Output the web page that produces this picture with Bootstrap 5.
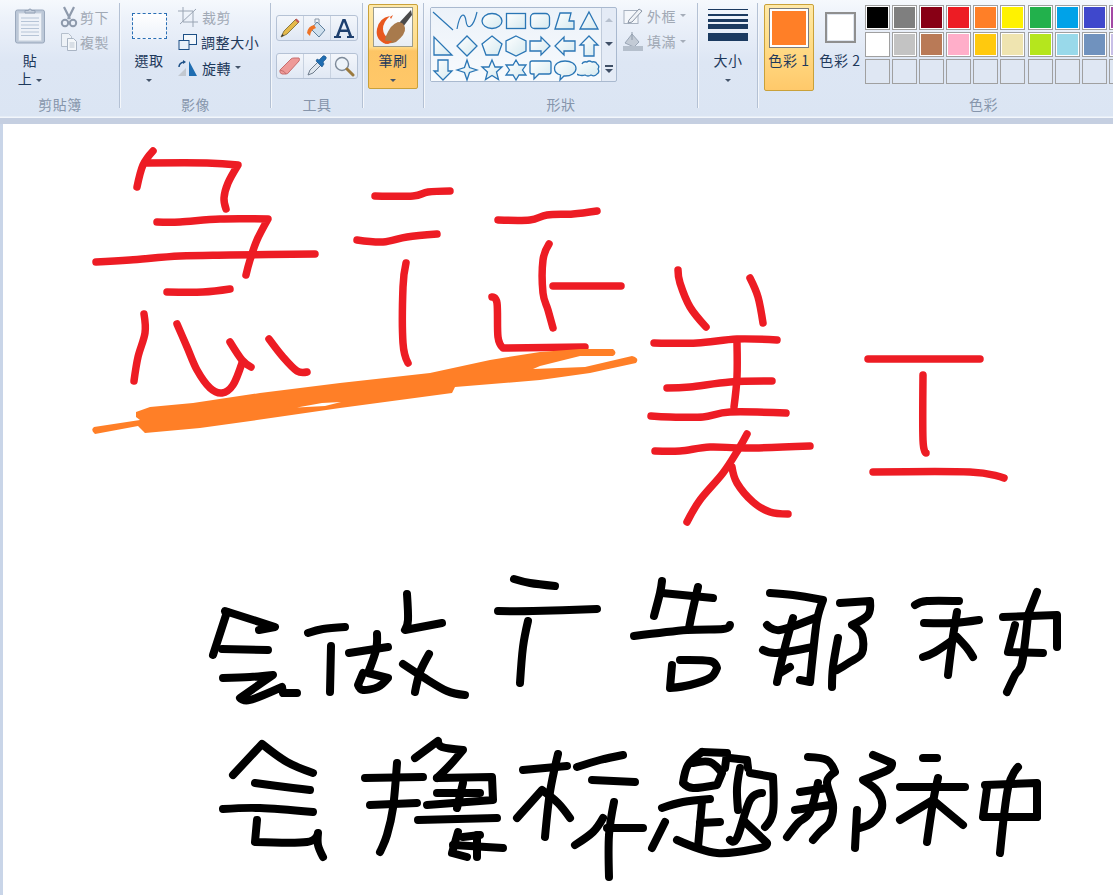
<!DOCTYPE html>
<html lang="zh-Hant">
<head>
<meta charset="utf-8">
<title>小畫家</title>
<link href="https://cdn.jsdelivr.net/npm/bootstrap@5.3.0/dist/css/bootstrap.min.css" rel="stylesheet">
<style>
html,body{height:100%;overflow:hidden;}
body{background:#c9d5e8;font-family:"Noto Sans CJK TC","Noto Sans CJK JP",sans-serif;font-size:14px;line-height:18px;color:#1e395b;}
.paint-app{width:1113px;height:895px;}
.ribbon{height:118px;background:linear-gradient(#f6f9fd 0,#edf2fa 18px,#dde6f4 62px,#dbe5f3 116px,#f2f6fb 117px);flex:none;}
.band{height:6px;background:#c5cfe1;flex:none;}
.rgroup{height:117px;flex:none;position:relative;}
.rgroup::after{content:"";position:absolute;right:0;top:3px;height:105px;width:1px;background:#b4c1d4;box-shadow:1px 0 0 #f4f7fb;}
.rgroup.last::after{display:none;}
.w-clip{width:120px;}.w-img{width:151px;}.w-tool{width:92px;}.w-brush{width:61px;}.w-shape{width:274px;}.w-size{width:60px;}.w-color{width:355px;}
.rbody{height:96px;position:relative;}
.rlabel{height:21px;text-align:center;color:#8695ab;letter-spacing:.5px;line-height:17px;}
.rlabel-color{padding-left:96px;}
.lbl{letter-spacing:.6px;white-space:nowrap;}
.off{color:#a1a9b5;}
.caret-dn{display:inline-block;width:0;height:0;border:3px solid transparent;border-top:3px solid #44546a;border-bottom:0;vertical-align:middle;}
.caret-off{border-top-color:#a5adb9;}
.bigbtn{width:44px;display:flex;flex-direction:column;align-items:center;text-align:center;flex:none;}
.stack{display:flex;flex-direction:column;flex:none;}
.lift{margin-top:-3px;}
.rowitem{display:flex;align-items:center;gap:4px;height:25.5px;white-space:nowrap;}
.clip-wrap{padding:7px 0 0 8px;gap:8px;}
.clip-wrap .rowitem{gap:2px;}
.clip-top{height:40px;}
.line-2{height:18px;}
.img-wrap{padding:7px 0 0 7px;gap:7px;}
.sel-box{width:35px;height:26px;border:1px dashed #2a6fb5;margin-top:6px;margin-bottom:12px;background:linear-gradient(#fff,#eef3fa);flex:none;}
.tool-wrap{padding:15px 0 0 5px;gap:12px;}
.toolbar-box{width:82px;height:26px;border:1px solid #b5c2d5;border-radius:3px;background:linear-gradient(#f3f6fb,#e0e8f4);display:flex;}
.toolcell{flex:1;display:flex;align-items:center;justify-content:center;border-right:1px solid #c8d2e0;}
.toolcell:last-child{border-right:0;}
.brushbtn{width:50px;height:85px;margin:4px 0 0 5px;border:1px solid #c9a13a;border-radius:2px;background:linear-gradient(#ffe9a8 0,#ffdc8a 42px,#fdc565 46px,#ffc869 85px);display:flex;flex-direction:column;align-items:center;}
.brushico{width:40px;height:40px;margin-top:2px;margin-bottom:4px;border:1px solid #9c9c8a;background:linear-gradient(#fff,#e8eef4);}
.gallery-outer{width:187px;height:75px;border:1px solid #a9b9cf;border-radius:2px;margin:7px 0 0 6px;background:#e4ebf6;display:flex;flex:none;}
.gallery{width:171px;background:linear-gradient(#ecf2f9,#f7fafd);display:grid;grid-template-columns:repeat(7,24.3px);grid-template-rows:25px 25px 23px;border-right:1px solid #c0cbdb;}
.gcell{display:flex;align-items:center;justify-content:center;}
.gscroll{flex:1;display:flex;flex-direction:column;align-items:center;}
.gscroll>div{flex:1;display:flex;align-items:center;justify-content:center;width:100%;}
.tri-up{width:0;height:0;border:4px solid transparent;border-bottom:4px solid #b6c0ce;border-top:0;}
.tri-dn{width:0;height:0;border:4px solid transparent;border-top:4px solid #3f4f66;border-bottom:0;}
.tri-more{width:8px;border-top:2px solid #3f4f66;padding-top:2px;}
.shape-side{padding-top:3px;margin-left:6px;}
.size-wrap{padding-top:9px;align-items:center;}
.sl{width:40px;background:#1b3a60;flex:none;}
.sl1{height:1px;}.sl2{height:2px;margin-top:4px;}.sl3{height:3px;margin-top:3px;}.sl4{height:5px;margin-top:2px;}.sl5{height:8px;margin-top:4px;margin-bottom:10px;}
.c1btn{width:50px;height:87px;margin:4px 0 0 6px;border:1px solid #c9a13a;border-radius:2px;background:linear-gradient(#ffe9a8 0,#ffe08e 30px,#ffc869 87px);display:flex;flex-direction:column;align-items:center;flex:none;}
.c1sw{width:40px;height:40px;margin-top:3px;margin-bottom:3px;border:1px solid #7c7c7c;padding:2px;background:#fff;}
.c1sw>div{height:100%;background:#ff7f27;}
.c2{width:46px;display:flex;flex-direction:column;align-items:center;margin:12px 0 0 3px;flex:none;}
.c2sw{width:31px;height:31px;border:2px solid #8f8f8f;background:#fff;box-shadow:inset 0 0 0 1px #dfe5ee;margin-bottom:8px;}
.palette{display:grid;grid-template-columns:repeat(10,25px);grid-auto-rows:25px;gap:2.1px;margin:5px 0 0 2px;flex:none;}
.swc{border:1px solid #a0a0a0;box-shadow:inset 0 0 0 1px #fff;}
.blank{box-shadow:none;background:#dfe7f3;}
.s0{background:#000}.s1{background:#7f7f7f}.s2{background:#880015}.s3{background:#ed1c24}.s4{background:#ff7f27}.s5{background:#fff200}.s6{background:#22b14c}.s7{background:#00a2e8}.s8{background:#3f48cc}.s9{background:#a349a4}
.t0{background:#fff}.t1{background:#c3c3c3}.t2{background:#b97a57}.t3{background:#ffaec9}.t4{background:#ffc90e}.t5{background:#efe4b0}.t6{background:#b5e61d}.t7{background:#99d9ea}.t8{background:#7092be}.t9{background:#c8bfe7}
.workspace{flex:1;padding-left:3px;min-height:0;}
.drawing{display:block;width:1110px;height:771px;background:#fff;}
.red path{fill:none;stroke:#ed1c24;stroke-width:7.5;stroke-linecap:round;stroke-linejoin:round;}
.ink path{fill:none;stroke:#000;stroke-width:8;stroke-linecap:round;stroke-linejoin:round;}
.sh{fill:url(#shg);stroke:#2a76b5;stroke-width:1.3;stroke-linejoin:miter;}
</style>
</head>
<body>
<svg width="0" height="0" class="d-block position-absolute"><defs><linearGradient id="shg" x1="0" y1="0" x2="1" y2="1"><stop offset="0" stop-color="#fff"/><stop offset="1" stop-color="#d5e9ef"/></linearGradient></defs></svg>
<div class="paint-app d-flex flex-column">
  <div class="ribbon d-flex">
    <!-- clipboard -->
    <div class="rgroup w-clip">
      <div class="rbody d-flex clip-wrap">
        <div class="bigbtn">
          <div class="clip-top"><svg width="32" height="38" viewBox="0 0 32 38"><rect x="1.5" y="3" width="29" height="33" rx="2" fill="#bcc8d8" stroke="#9aa8bc"/><rect x="4.5" y="6" width="23" height="28" fill="#eef2f8" stroke="#c9d2de"/><path d="M7 11h18M7 14.500h18M7 18h18M7 21.500h18M7 25h18M7 28.500h18" stroke="#b6c4d6" stroke-width="1"/><path d="M11 6V3.500h3.500a1.500 1.500 0 0 1 3 0H21V6z" fill="#c2ccda" stroke="#94a2b6"/></svg></div>
          <div class="lbl line-2 mt-1">貼</div>
          <div class="lbl line-2">上 <span class="caret-dn"></span></div>
        </div>
        <div class="stack off lift">
          <div class="rowitem"><svg width="18" height="22" viewBox="0 0 18 22"><path d="M4 1l6 12M14 1l-6 12" stroke="#8e9aac" stroke-width="2.200" fill="none"/><circle cx="5" cy="17" r="3.200" fill="none" stroke="#8e9aac" stroke-width="2"/><circle cx="13" cy="17" r="3.200" fill="none" stroke="#8e9aac" stroke-width="2"/></svg><span class="lbl">剪下</span></div>
          <div class="rowitem"><svg width="18" height="20" viewBox="0 0 18 20"><path d="M1.500 1.500h7l3 3v10h-10z" fill="#eef2f7" stroke="#b5bfcc"/><path d="M7.500 6.500h6l3 3v9h-9z" fill="#f4f7fa" stroke="#aab5c4"/><path d="M9.500 11h5M9.500 13h5M9.500 15h5" stroke="#bcc6d2"/></svg><span class="lbl">複製</span></div>
        </div>
      </div>
      <div class="rlabel">剪貼簿</div>
    </div>
    <!-- image -->
    <div class="rgroup w-img">
      <div class="rbody d-flex img-wrap">
        <div class="bigbtn">
          <div class="sel-box"></div>
          <div class="lbl line-2">選取</div>
          <div class="line-2"><span class="caret-dn"></span></div>
        </div>
        <div class="stack lift">
          <div class="rowitem off"><svg width="20" height="20" viewBox="0 0 20 20"><path d="M5 0v15h15M0 4h15v16M2 17L18 2" stroke="#9aa5b4" fill="none"/></svg><span class="lbl">裁剪</span></div>
          <div class="rowitem"><svg width="19" height="18" viewBox="0 0 19 18"><rect x="5.500" y="1.500" width="13" height="10" fill="#f3f7fb" stroke="#1c4f86"/><rect x="1" y="7.500" width="10" height="9" fill="#e8f0f8" stroke="#1c4f86"/></svg><span class="lbl">調整大小</span></div>
          <div class="rowitem"><svg width="20" height="18" viewBox="0 0 20 18"><path d="M0 17L8 9v8z" fill="#c2c8d0"/><path d="M11 2v15h8z" fill="#1f6db1"/><path d="M1 8q0-4 5-5" stroke="#1c4f86" stroke-width="1.500" fill="none"/><path d="M5 1l3 2-3 2z" fill="#1c4f86"/></svg><span class="lbl">旋轉</span> <span class="caret-dn"></span></div>
        </div>
      </div>
      <div class="rlabel">影像</div>
    </div>
    <!-- tools -->
    <div class="rgroup w-tool">
      <div class="rbody d-flex flex-column tool-wrap">
        <div class="toolbar-box">
          <div class="toolcell"><svg width="22" height="22" viewBox="0 0 22 22"><path d="M2 20l3-6L17 2l3 3L8 17z" fill="#e5b94a" stroke="#8a7a44"/><path d="M2 20l1.500-3 1.500 1.500z" fill="#333"/><path d="M16 3l3 3 1.500-1.500-3-3z" fill="#c2575a"/></svg></div>
          <div class="toolcell"><svg width="22" height="22" viewBox="0 0 22 22"><path d="M11 5l8 8-6 7-8-8z" fill="#cfe0ee" stroke="#5e7f9c"/><path d="M9 6V2h4v5" fill="none" stroke="#8a98a8"/><path d="M1 16Q2 9 8 8l2 3Q5 12 4 19z" fill="#ee7326"/></svg></div>
          <div class="toolcell"><svg width="22" height="22" viewBox="0 0 22 22"><path d="M9.500 2h3L19 19h2v2h-7v-2h2l-1.300-4H7.200L6 19h2v2H1v-2h2zM8 12.500h6L11 5z" fill="#1d3f6e" fill-rule="evenodd"/></svg></div>
        </div>
        <div class="toolbar-box">
          <div class="toolcell"><svg width="22" height="20" viewBox="0 0 22 20"><path d="M1 14L12 3q1-1 3-1h5q1 1 0 3L10 16q-1 2-3 2H3q-3-1-2-4z" fill="#ee9a98" stroke="#c66e6e"/><path d="M1 14q5 1 6 4" fill="none" stroke="#c66e6e"/></svg></div>
          <div class="toolcell"><svg width="22" height="22" viewBox="0 0 22 22"><path d="M2 20l2-5 8-8 3 3-8 8z" fill="#dfe6ee" stroke="#6e7c8c"/><path d="M10 6l6 6 2-3-1-2 3-3q1-2-1-3t-3 1l-3 3-2-1z" fill="#1f6db1" stroke="#174f85" stroke-width=".6"/></svg></div>
          <div class="toolcell"><svg width="22" height="22" viewBox="0 0 22 22"><circle cx="9" cy="9" r="6.500" fill="#eef4fa" stroke="#7d8a99" stroke-width="1.400"/><path d="M14 14l6 6" stroke="#9b7a3e" stroke-width="3" stroke-linecap="round"/></svg></div>
        </div>
      </div>
      <div class="rlabel">工具</div>
    </div>
    <!-- brush -->
    <div class="rgroup w-brush">
      <div class="rbody">
        <div class="brushbtn">
          <div class="brushico"><svg width="38" height="38" viewBox="0 0 38 38" class="d-block"><path d="M12 36Q1 32 3 21T16 8q-7 6-7 13t8 11z" fill="#e8581e"/><path d="M16 9l3-2-2 4z" fill="#e8581e"/><path d="M37 2L25 15l4 4L38 7z" fill="#4a4a4a"/><path d="M24 14q6 0 7 6t-9 14q-5 2-9 1-3-3-1-7 5-12 12-14z" fill="#a87a4c"/><path d="M12 33q-2 3 2 3 3-1 4-3z" fill="#e8581e"/></svg></div>
          <div class="lbl line-2">筆刷</div>
          <div class="line-2"><span class="caret-dn"></span></div>
        </div>
      </div>
      <div class="rlabel">&nbsp;</div>
    </div>
    <!-- shapes -->
    <div class="rgroup w-shape">
      <div class="rbody d-flex">
        <div class="gallery-outer">
          <div class="gallery">
            <div class="gcell"><svg width="24" height="24" viewBox="0 0 24 24"><path d="M2 3L22 21" fill="none" stroke="#2a76b5" stroke-width="1.200"/></svg></div>
            <div class="gcell"><svg width="24" height="24" viewBox="0 0 24 24"><path d="M2 20C5 3 10 3 11 12S18 20 22 3" fill="none" stroke="#2a76b5" stroke-width="1.200"/></svg></div>
            <div class="gcell"><svg width="24" height="24" viewBox="0 0 24 24"><ellipse class="sh" cx="12" cy="12" rx="10" ry="7.500"/></svg></div>
            <div class="gcell"><svg width="24" height="24" viewBox="0 0 24 24"><rect class="sh" x="2.500" y="4.500" width="19" height="15"/></svg></div>
            <div class="gcell"><svg width="24" height="24" viewBox="0 0 24 24"><rect class="sh" x="2.500" y="4.500" width="19" height="15" rx="4"/></svg></div>
            <div class="gcell"><svg width="24" height="24" viewBox="0 0 24 24"><path class="sh" d="M2 20L7 4h11l-2 8h5v8z"/></svg></div>
            <div class="gcell"><svg width="24" height="24" viewBox="0 0 24 24"><path class="sh" d="M12 3l9 17H3z"/></svg></div>
            <div class="gcell"><svg width="24" height="24" viewBox="0 0 24 24"><path class="sh" d="M3 3v18h18z"/></svg></div>
            <div class="gcell"><svg width="24" height="24" viewBox="0 0 24 24"><path class="sh" d="M12 2l10 10-10 10L2 12z"/></svg></div>
            <div class="gcell"><svg width="24" height="24" viewBox="0 0 24 24"><path class="sh" d="M12 2l10 8-4 11H6L2 10z"/></svg></div>
            <div class="gcell"><svg width="24" height="24" viewBox="0 0 24 24"><path class="sh" d="M12 2l10 5v10l-10 5-10-5V7z"/></svg></div>
            <div class="gcell"><svg width="24" height="24" viewBox="0 0 24 24"><path class="sh" d="M2 7h11V3l9 9-9 9v-4H2z"/></svg></div>
            <div class="gcell"><svg width="24" height="24" viewBox="0 0 24 24"><path class="sh" d="M22 7H11V3l-9 9 9 9v-4h11z"/></svg></div>
            <div class="gcell"><svg width="24" height="24" viewBox="0 0 24 24"><path class="sh" d="M12 2l9 9h-4v11H7V11H3z"/></svg></div>
            <div class="gcell"><svg width="24" height="24" viewBox="0 0 24 24"><path class="sh" d="M12 22l9-9h-4V2H7v11H3z"/></svg></div>
            <div class="gcell"><svg width="24" height="24" viewBox="0 0 24 24"><path class="sh" d="M12 2l2.500 7.500L22 12l-7.500 2.500L12 22l-2.500-7.500L2 12l7.500-2.500z"/></svg></div>
            <div class="gcell"><svg width="24" height="24" viewBox="0 0 24 24"><path class="sh" d="M12 2l3 7h7l-5.500 5 2 7.500-6.500-4-6.500 4 2-7.500L2 9h7z"/></svg></div>
            <div class="gcell"><svg width="24" height="24" viewBox="0 0 24 24"><path class="sh" d="M12 2l3 5h7l-3.500 5 3.500 5h-7l-3 5-3-5H2l3.500-5L2 7h7z"/></svg></div>
            <div class="gcell"><svg width="24" height="24" viewBox="0 0 24 24"><path class="sh" d="M4 3h17q2 0 2 2v9q0 2-2 2H11l-5 5v-5H4q-2 0-2-2V5q0-2 2-2z"/></svg></div>
            <div class="gcell"><svg width="24" height="24" viewBox="0 0 24 24"><path class="sh" d="M12 3c6 0 11 3 11 7.500S18 18 12 18h-1l-4 4 .5-5C4 16 1.500 13.500 1.500 10.500 1.500 6 6 3 12 3z"/></svg></div>
            <div class="gcell"><svg width="24" height="24" viewBox="0 0 24 24"><path class="sh" d="M5 6q1-3 5-2 2-2 5 0 4-1 5 2 3 2 1 5 2 3-1 5-2 3-6 1-3 2-6 0-3 1-6 0-4-1-3-5-4-6 0-3 3-3z"/></svg></div>
          </div>
          <div class="gscroll">
            <div><span class="tri-up"></span></div>
            <div><span class="tri-dn"></span></div>
            <div><span class="tri-more"><span class="tri-dn d-block"></span></span></div>
          </div>
        </div>
        <div class="stack off shape-side">
          <div class="rowitem"><svg width="20" height="18" viewBox="0 0 20 18"><rect x="1" y="3.500" width="14" height="13" fill="#f4f7fb" stroke="#a8b2c0"/><path d="M6 13l10-11 3 2-10 11-4 1z" fill="#f0f3f7" stroke="#8a95a5"/></svg><span class="lbl">外框</span> <span class="caret-dn caret-off"></span></div>
          <div class="rowitem"><svg width="20" height="20" viewBox="0 0 20 20"><path d="M2 12l7-9 7 8-5 5z" fill="#c3cbd6" stroke="#9aa6b6"/><path d="M9 1v8" stroke="#8f9aaa"/><rect x="0" y="15" width="20" height="5" fill="#b5bfcc"/></svg><span class="lbl">填滿</span> <span class="caret-dn caret-off"></span></div>
        </div>
      </div>
      <div class="rlabel">形狀</div>
    </div>
    <!-- size -->
    <div class="rgroup w-size">
      <div class="rbody d-flex flex-column size-wrap">
        <div class="sl sl1"></div><div class="sl sl2"></div><div class="sl sl3"></div><div class="sl sl4"></div><div class="sl sl5"></div>
        <div class="lbl line-2">大小</div>
        <div class="line-2"><span class="caret-dn"></span></div>
      </div>
      <div class="rlabel">&nbsp;</div>
    </div>
    <!-- colours -->
    <div class="rgroup w-color last">
      <div class="rbody d-flex">
        <div class="c1btn">
          <div class="c1sw"><div></div></div>
          <div class="lbl">色彩 1</div>
        </div>
        <div class="c2">
          <div class="c2sw"></div>
          <div class="lbl">色彩 2</div>
        </div>
        <div class="palette">
          <div class="swc s0"></div><div class="swc s1"></div><div class="swc s2"></div><div class="swc s3"></div><div class="swc s4"></div><div class="swc s5"></div><div class="swc s6"></div><div class="swc s7"></div><div class="swc s8"></div><div class="swc s9"></div>
          <div class="swc t0"></div><div class="swc t1"></div><div class="swc t2"></div><div class="swc t3"></div><div class="swc t4"></div><div class="swc t5"></div><div class="swc t6"></div><div class="swc t7"></div><div class="swc t8"></div><div class="swc t9"></div>
          <div class="swc blank"></div><div class="swc blank"></div><div class="swc blank"></div><div class="swc blank"></div><div class="swc blank"></div><div class="swc blank"></div><div class="swc blank"></div><div class="swc blank"></div><div class="swc blank"></div><div class="swc blank"></div>
        </div>
      </div>
      <div class="rlabel rlabel-color">色彩</div>
    </div>
  </div>
  <div class="band"></div>
  <div class="workspace">
    <svg class="drawing" viewBox="3 124 1110 771">
      <g class="red">
        <path d="M153 151L143 165L137 187"/>
        <path d="M147 163L207 163L238 165L228 183L224 198L226 209"/>
        <path d="M157 222L180 222L220 219L268 219L257 240L250 260L246 275"/>
        <path d="M96 262L130 260L180 256L230 255L315 254"/>
        <path d="M167 292L203 292L230 289"/>
        <path d="M144 314L145 333L138 357L134 381"/>
        <path d="M177 324L187 347L197 370L210 388L222 393L233 385L242 363"/>
        <path d="M230 342L242 360L251 367"/>
        <path d="M269 339L283 357L297 371L307 372"/>
        <path d="M375 196L413 196L428 192L450 191"/>
        <path d="M357 240L383 242L407 237L437 234"/>
        <path d="M406 263L403 287L403 343L408 363"/>
        <path d="M498 220L530 220L547 215L573 214L597 211"/>
        <path d="M549 244L543 260L543 293L548 310L553 328"/>
        <path d="M553 286L621 286"/>
        <path d="M492 297L497 303L498 337L503 348L585 347"/>
        <path d="M678 270L680 283L690 307L706 327"/>
        <path d="M750 278L758 297L763 323"/>
        <path d="M654 343L697 343L737 339L777 340"/>
        <path d="M737 343L737 377L734 407"/>
        <path d="M667 388L690 387L730 382L772 381"/>
        <path d="M651 416L670 417L703 417L730 412L786 413"/>
        <path d="M655 451L680 451L710 447L747 448L810 446"/>
        <path d="M747 434L738 450L723 473L700 500L687 522"/>
        <path d="M732 467L737 483L753 502L770 512L788 514"/>
        <path d="M868 359L980 359"/>
        <path d="M923 375L923 440L926 453"/>
        <path d="M873 472L970 472L1004 478"/>
      </g>
      <path fill="#ff7f27" d="M136 412L150 407L193 403L260 393L340 383L430 373L490 360L540 352L580 349L613 349Q618 353 613 356L580 356L540 366L533 369L585 367L632 356Q640 358 636 363L590 373L540 380L455 387L452 393L340 408L257 420L200 428L145 433L138 426L95 434Q90 430 94 427L140 420L136 417Z"/>
      <path fill="#fff" d="M297 407.500L322 403L341 402L325 406Z"/>
      <g class="ink">
        <path d="M225 611L275 627L259 630"/><path d="M227 612L213 655"/><path d="M222 649L268 650"/>
        <path d="M223 678L250 677L273 675L240 698L250 700L282 687L283 693L297 693"/>
        <path d="M308 633L323 629L345 627"/><path d="M331 646L330 692"/><path d="M349 653L388 647"/>
        <path d="M377 634L376 650L368 673L388 678L378 687L363 690L358 685L363 673"/>
        <path d="M407 594L408 620L405 630L442 623"/><path d="M403 664L423 677L447 691L465 695"/><path d="M429 654L420 672L415 692"/>
        <path d="M514 579L530 583L555 586"/><path d="M498 611L533 611L597 609"/><path d="M528 621L523 647L520 683"/>
        <path d="M662 581L660 593L654 616"/><path d="M662 593L713 598"/><path d="M698 587L692 613L689 628"/>
        <path d="M634 636L687 630L723 629L730 625"/>
        <path d="M672 665L670 688L690 685L710 678L717 668L710 661L680 660"/>
        <path d="M770 593L793 595L823 600L817 620L813 653L810 682L800 680"/>
        <path d="M767 625L780 630L815 618"/><path d="M793 618L785 647L777 682"/><path d="M763 650L777 653L813 647"/><path d="M780 673L790 667"/>
        <path d="M840 603L870 601L868 615L852 625L862 635L862 653L850 662L837 670"/><path d="M838 638L833 667L832 687"/>
        <path d="M915 605L927 601L959 601"/><path d="M924 623L953 623L979 620"/><path d="M957 612L952 643L948 675"/>
        <path d="M923 657L935 652L957 637L967 648L973 657"/>
        <path d="M1037 592L1028 615"/><path d="M1003 617L1057 615L1057 647"/><path d="M1015 625L1008 652L1043 653"/>
        <path d="M1028 615L1022 663L1015 675L1007 692"/>
        <path d="M233 775L262 744L287 762L313 773"/><path d="M255 783L293 788L310 790"/><path d="M223 809L260 808L313 812"/>
        <path d="M257 820L255 842L307 842L318 833L318 845L323 857"/>
        <path d="M365 778L423 777"/><path d="M397 763L393 808L387 835L380 852"/><path d="M370 805L417 803"/>
        <path d="M415 758L438 741L442 747L463 750L450 765L437 778"/><path d="M437 778L492 777L493 800L427 805"/>
        <path d="M463 783L457 808"/><path d="M437 793L480 793"/><path d="M418 820L497 818"/>
        <path d="M458 832L452 853L467 857"/><path d="M453 845L503 848"/><path d="M477 835L477 857"/><path d="M463 837L480 835"/>
        <path d="M523 770L567 766"/><path d="M558 754L550 792L545 837"/><path d="M517 818L542 790L558 803L570 818"/>
        <path d="M577 767L600 760L623 755"/><path d="M592 780L635 782"/><path d="M614 802L609 835L609 877"/>
        <path d="M575 845L593 832L603 818"/><path d="M607 828L643 828"/>
        <path d="M652 848L665 822"/>
        <path d="M702 752L688 765L683 783L693 788L717 785L722 773L710 762L693 763"/><path d="M702 752L727 753L725 768"/>
        <path d="M730 758L747 760L748 768"/><path d="M750 773L773 777L773 812L765 827"/><path d="M740 768L737 788L738 810"/>
        <path d="M762 793L750 800L737 838L730 840"/><path d="M745 822L767 843L760 848L717 853L677 840"/>
        <path d="M662 808L683 802L710 799"/><path d="M702 802L698 847"/><path d="M700 823L720 822"/>
        <path d="M808 757L827 760L835 772L827 782L833 805L830 822L820 832L813 840"/><path d="M800 792L827 788"/>
        <path d="M818 783L810 812L798 823L787 837"/><path d="M795 810L830 805"/>
        <path d="M873 755L892 763L888 770L863 780L878 792L882 808L873 822L860 828"/><path d="M857 810L855 848"/>
        <path d="M923 758L937 758"/><path d="M900 787L965 787"/><path d="M938 778L933 802L927 842"/><path d="M900 820L933 800L963 825"/>
        <path d="M1018 767L1008 788L1000 853"/><path d="M985 785L1037 783L1037 817"/><path d="M987 788L983 817L1037 817"/>
      </g>
    </svg>
  </div>
</div>
<script src="https://cdn.jsdelivr.net/npm/bootstrap@5.3.0/dist/js/bootstrap.bundle.min.js"></script>
<script>
// Rounds the traced mouse strokes the way a freehand brush runs, keeping sharp turns sharp.
document.querySelectorAll('.red path,.ink path').forEach(function(el){
  var n=el.getAttribute('d').match(/-?[\d.]+/g).map(Number),p=[];
  for(var i=0;i<n.length;i+=2)p.push([n[i],n[i+1]]);
  if(p.length<3)return;
  function corner(i){
    if(i<=0||i>=p.length-1)return true;
    var a=Math.atan2(p[i][1]-p[i-1][1],p[i][0]-p[i-1][0]),b=Math.atan2(p[i+1][1]-p[i][1],p[i+1][0]-p[i][0]);
    var d=Math.abs(a-b);if(d>Math.PI)d=2*Math.PI-d;
    return d>1.05;
  }
  var out='M'+p[0][0]+' '+p[0][1];
  for(var j=0;j<p.length-1;j++){
    var a=p[j],b=p[j+1],c1=a,c2=b;
    if(!corner(j))c1=[a[0]+(b[0]-p[j-1][0])/6,a[1]+(b[1]-p[j-1][1])/6];
    if(!corner(j+1))c2=[b[0]-(p[j+2][0]-a[0])/6,b[1]-(p[j+2][1]-a[1])/6];
    out+='C'+c1[0]+' '+c1[1]+' '+c2[0]+' '+c2[1]+' '+b[0]+' '+b[1];
  }
  el.setAttribute('d',out);
});
</script>
</body>
</html>
